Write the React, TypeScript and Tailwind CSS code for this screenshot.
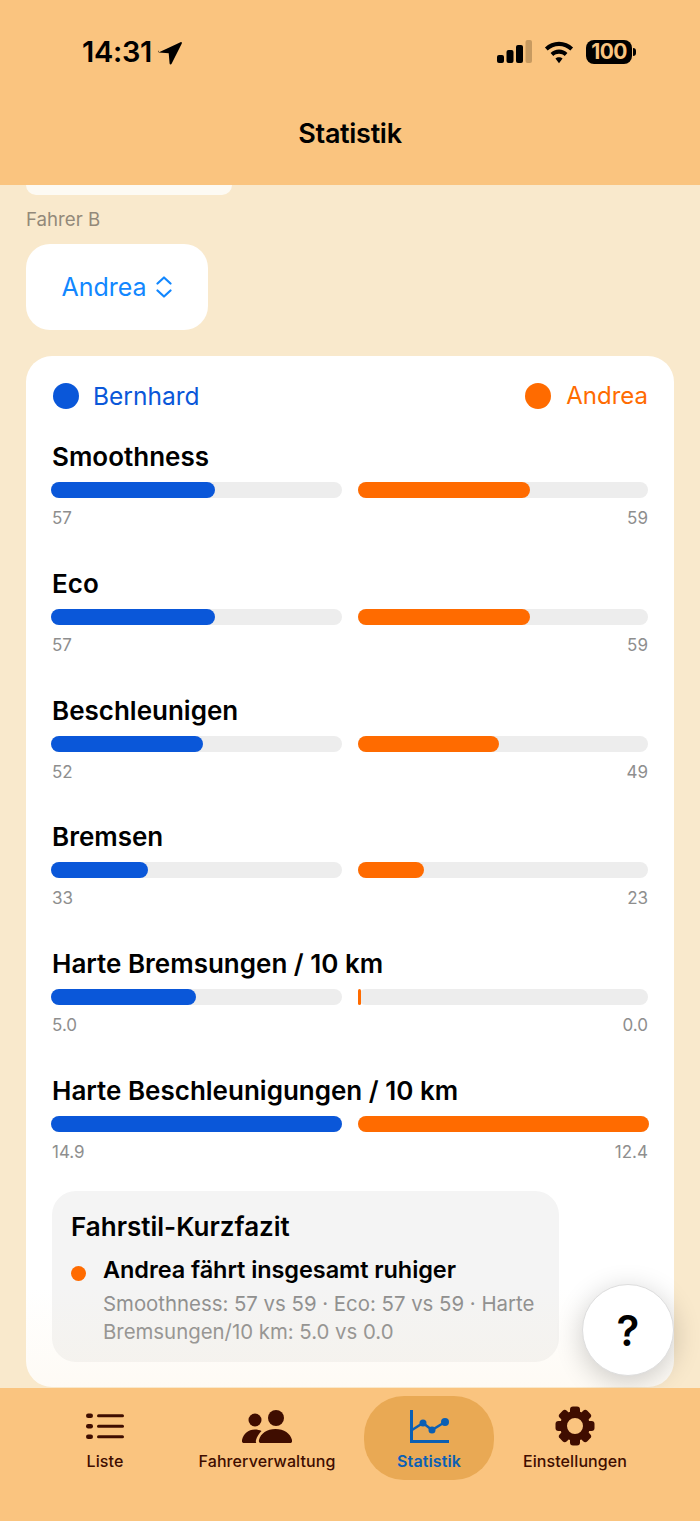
import React from 'react';

const font = "font-['Inter','Liberation_Sans',sans-serif]";

interface Metric {
  label: string;
  a: string;
  b: string;
  widthA: number;
  widthB: number;
}

const metrics: Metric[] = [
  { label: 'Smoothness', a: '57', b: '59', widthA: 164, widthB: 172 },
  { label: 'Eco', a: '57', b: '59', widthA: 164, widthB: 172 },
  { label: 'Beschleunigen', a: '52', b: '49', widthA: 152, widthB: 141 },
  { label: 'Bremsen', a: '33', b: '23', widthA: 97, widthB: 66 },
  { label: 'Harte Bremsungen / 10 km', a: '5.0', b: '0.0', widthA: 145, widthB: 3 },
  { label: 'Harte Beschleunigungen / 10 km', a: '14.9', b: '12.4', widthA: 291, widthB: 291 },
];

const MetricRow: React.FC<{ metric: Metric }> = ({ metric }) => (
  <div className="h-[126.8px]">
    <div className="h-[32px] text-[26px] leading-[32px] font-semibold text-black">{metric.label}</div>
    <div className="mt-[9px] ml-[-1px] flex gap-[16px]">
      <div className="h-[16px] flex-1 rounded-full bg-[#ededed]">
        <div className="h-full rounded-full bg-[#0a57d9]" style={{ width: metric.widthA }} />
      </div>
      <div className="h-[16px] flex-1 rounded-full bg-[#ededed]">
        <div className="h-full rounded-full bg-[#ff6b00]" style={{ width: metric.widthB }} />
      </div>
    </div>
    <div className="mt-[9px] flex justify-between text-[17px] leading-[22px] text-[#8e8e8e]">
      <span>{metric.a}</span>
      <span>{metric.b}</span>
    </div>
  </div>
);

const TabItem: React.FC<{ label: string; active?: boolean; className?: string; children: React.ReactNode }> = ({
  label,
  active,
  className = '',
  children,
}) => (
  <div className={`flex w-[140px] flex-col items-center ${className}`}>
    <div className="flex h-[40px] items-center justify-center">{children}</div>
    <span
      className={`mt-[5px] whitespace-nowrap text-[16px] leading-[20px] tracking-[0.1px] ${
        active ? 'font-semibold text-[#0a5fb4]' : 'font-medium text-[#3f0d00]'
      }`}
    >
      {label}
    </span>
  </div>
);

export default function App() {
  return (
    <div className={`relative flex h-[1521px] w-[700px] flex-col overflow-hidden bg-[#f9e9cc] ${font}`}>
      {/* Header */}
      <header className="flex h-[185px] shrink-0 flex-col bg-[#fac47f] px-[64px]">
        <div className="mt-[26px] flex h-[52px] items-center justify-between pl-[18px]">
          <div className="flex items-center gap-[5px]">
            <span className="text-[29px] leading-[36px] font-semibold tracking-[-0.3px] text-black">14:31</span>
            <svg width="26" height="26" viewBox="0 0 26 26">
              <path d="M1.500 13.500 23.500 3.200c.9-.4 1.700.4 1.300 1.300L14.600 24.800c-.5 1-1.900.8-2-.3l-.9-10.200-9.800-.9c-1.100-.1-1.300-1.400-.4-1.900z" fill="#000" />
            </svg>
          </div>
          <div className="flex items-center gap-[12px]">
            <svg width="35" height="24" viewBox="0 0 35 24">
              <rect x="0" y="15" width="7" height="8" rx="2" fill="#000" />
              <rect x="9.500" y="10" width="7" height="13" rx="2" fill="#000" />
              <rect x="19" y="5" width="7" height="18" rx="2" fill="#000" />
              <rect x="28.500" y="0" width="6.500" height="23" rx="2" fill="#c79a60" />
            </svg>
            <svg width="30" height="23" viewBox="0 0 32 24">
              <path d="M16 .500c5.800 0 11 2.300 15 6.200l-2.900 3.200C24.900 6.900 20.700 5 16 5S7.100 6.900 3.900 9.900L1 6.700C5 2.800 10.200.500 16 .500z" fill="#000" />
              <path d="M16 8.800c3.500 0 6.600 1.400 9 3.700l-2.900 3.200c-1.600-1.500-3.700-2.400-6.100-2.400s-4.500.9-6.100 2.400L7 12.500c2.400-2.300 5.500-3.700 9-3.700z" fill="#000" />
              <path d="M16 17c1.500 0 2.800.5 3.800 1.500L16 23.500l-3.800-5C13.200 17.500 14.500 17 16 17z" fill="#000" />
            </svg>
            <div className="flex items-center gap-[1px]">
              <div className="flex h-[24px] w-[46px] items-center justify-center rounded-[8px] bg-black text-[21px] leading-[24px] font-bold tracking-[-0.6px] text-[#fac47f]">
                100
              </div>
              <div className="h-[8px] w-[3px] rounded-r-full bg-black" />
            </div>
          </div>
        </div>
        <div className="mt-[40px] text-center text-[27px] leading-[32px] font-semibold tracking-[-0.3px] text-black">Statistik</div>
      </header>

      {/* Content */}
      <main className="flex-1 overflow-hidden px-[26px]">
        <div className="h-[10px] w-[206px] rounded-b-[22px] bg-[#fdfaf3]" />
        <div className="mt-[13px] text-[18.700px] leading-[24px] text-[#93897a]">Fahrer B</div>
        <div className="mt-[12px] flex h-[86px] w-[182px] items-center justify-center gap-[9px] rounded-[24px] bg-white">
          <span className="ml-[-1px] text-[25px] leading-[32px] text-[#1287ff]">Andrea</span>
          <svg width="16" height="22" viewBox="0 0 16 22" fill="none" stroke="#1287ff" strokeWidth="2.200" strokeLinecap="round" strokeLinejoin="round">
            <path d="m1.500 7.500 6.500-6 6.500 6M1.500 14.500l6.500 6 6.500-6" />
          </svg>
        </div>

        <section className="mt-[26px] h-[1031px] rounded-[26px] bg-white px-[26px] pt-[24px]">
          <div className="flex items-center justify-between">
            <div className="ml-[1px] flex items-center gap-[14px]">
              <div className="h-[26px] w-[26px] rounded-full bg-[#0a57d9]" />
              <span className="text-[24.500px] leading-[32px] text-[#0a57d9]">Bernhard</span>
            </div>
            <div className="flex items-center gap-[15px]">
              <div className="h-[26px] w-[26px] rounded-full bg-[#ff6b00]" />
              <span className="text-[24px] leading-[32px] text-[#ff6b00]">Andrea</span>
            </div>
          </div>

          <div className="mt-[29px]">
            {metrics.map((m) => (
              <MetricRow key={m.label} metric={m} />
            ))}
          </div>

          <div className="mt-[-11px] h-[171px] w-[507px] rounded-[24px] bg-[#f4f4f4] px-[19px] pt-[20px]">
            <div className="text-[26px] leading-[32px] font-semibold text-black">Fahrstil-Kurzfazit</div>
            <div className="mt-[11px] flex gap-[17px]">
              <div className="mt-[12px] h-[15px] w-[15px] shrink-0 rounded-full bg-[#ff6b00]" />
              <div>
                <div className="text-[23.500px] leading-[32px] font-semibold tracking-[-0.07px] text-black">Andrea fährt insgesamt ruhiger</div>
                <div className="mt-[4px] text-[20.360px] leading-[28px] text-[#8e8e8e]">
                  Smoothness: 57 vs 59 · Eco: 57 vs 59 · Harte Bremsungen/10 km: 5.0 vs 0.0
                </div>
              </div>
            </div>
          </div>
        </section>
      </main>

      {/* Fade above the tab bar */}
      <div className="pointer-events-none absolute bottom-[133px] left-0 h-[100px] w-full bg-gradient-to-b from-transparent to-[#f9e9cc]/20" />

      {/* Help button */}
      <button className="absolute bottom-[145px] right-[26px] flex h-[92px] w-[92px] items-center justify-center rounded-full border border-[#dddddd] bg-white text-[42px] font-semibold text-black shadow-[0_6px_28px_rgba(0,0,0,0.2)]">
        ?
      </button>

      {/* Tab bar */}
      <nav className="relative h-[133px] shrink-0 bg-[#fac47f]">
        <div className="absolute left-[364px] top-[8px] h-[84px] w-[130px] rounded-[40px] bg-[#e9a954]" />
        <div className="relative flex pt-[18px] pl-[35px]">
          <TabItem label="Liste">
            <svg width="38" height="26" viewBox="0 0 38 26" fill="#3f0d00">
              <rect x="0" y="0.500" width="7" height="4.500" rx="2.200" />
              <rect x="11" y="1.200" width="27" height="3" rx="1.500" />
              <rect x="0" y="11" width="7" height="4.500" rx="2.200" />
              <rect x="11" y="11.700" width="27" height="3" rx="1.500" />
              <rect x="0" y="21.500" width="7" height="4.500" rx="2.200" />
              <rect x="11" y="22.200" width="27" height="3" rx="1.500" />
            </svg>
          </TabItem>
          <TabItem label="Fahrerverwaltung" className="ml-[22px]">
            <svg width="50" height="33" viewBox="0 0 50 33" fill="#3f0d00">
              <circle cx="13" cy="10" r="6.500" />
              <circle cx="34" cy="8" r="8" />
              <path d="M2 33c-1.500 0-2.500-1-2-3C1.500 24 6 19.500 13 19.500c2.500 0 4.500.5 6.500 1.500-2.500 2.500-4.500 5.500-5.500 9-.3 1.200-.2 2.200.2 3z" />
              <path d="M19 33c-1.500 0-2.500-1-2-3C18.500 23.500 25 19 33.500 19S48.500 23.500 50 30c.4 2-.5 3-2 3z" />
            </svg>
          </TabItem>
          <TabItem label="Statistik" active className="ml-[22px]">
            <svg width="39" height="33" viewBox="0 0 39 33" fill="none" stroke="#0a5fb4">
              <path d="M1.500 0v31.500h37.500" strokeWidth="3" />
              <path d="M2 20 13 13l9 7 13-8" strokeWidth="2.500" />
              <circle cx="13" cy="13" r="3.500" fill="#0a5fb4" stroke="none" />
              <circle cx="22" cy="20" r="3.500" fill="#0a5fb4" stroke="none" />
              <circle cx="35" cy="12" r="4" fill="#0a5fb4" stroke="none" />
            </svg>
          </TabItem>
          <TabItem label="Einstellungen" className="ml-[6px]">
            <svg width="40" height="40" viewBox="-20 -20 40 40" fill="#3f0d00">
              {[0, 45, 90, 135, 180, 225, 270, 315].map((deg) => (
                <rect key={deg} x="-5" y="-19.500" width="10" height="10" rx="3" transform={`rotate(${deg})`} />
              ))}
              <circle r="11.500" fill="none" stroke="#3f0d00" strokeWidth="7" />
            </svg>
          </TabItem>
        </div>
      </nav>
    </div>
  );
}
